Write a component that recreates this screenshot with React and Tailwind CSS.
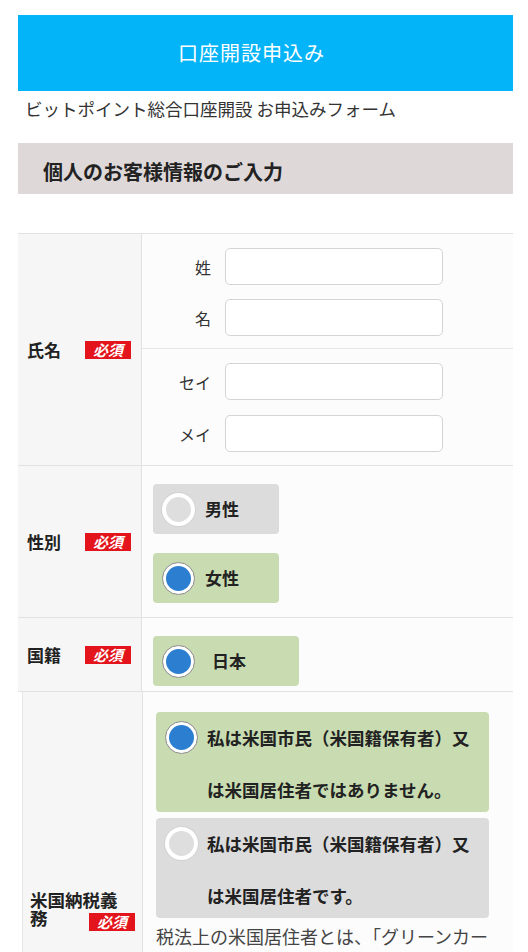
import React from "react";

const FONT = { fontFamily: '"Noto Sans CJK JP", "Noto Sans", sans-serif' };

function Badge() {
  return (
    <span className="inline-flex items-center justify-center w-[46px] h-[18px] bg-[#e3141b] text-white text-[15px] leading-[18px] italic font-bold">
      必須
    </span>
  );
}

function Radio({ checked }) {
  if (checked) {
    return (
      <span className="shrink-0 w-[33px] h-[33px] rounded-full border border-[#8a8a8a] bg-white flex items-center justify-center">
        <span className="w-[25px] h-[25px] rounded-full bg-[#2c7fd0]" />
      </span>
    );
  }
  return (
    <span className="shrink-0 w-[33px] h-[33px] rounded-full border-[4px] border-white bg-[#dedede] shadow-[0_0_0_1px_#d2d2d2]" />
  );
}

function LeftCell({ label }) {
  return (
    <div className="w-[124px] shrink-0 bg-[#f6f6f6] border-r border-[#e2e2e2] flex items-center pl-[9px]">
      <span className="w-[58px] text-[17px] font-bold text-[#222]">{label}</span>
      <Badge />
    </div>
  );
}

function InputRow({ label }) {
  return (
    <div className="flex items-center">
      <span className="w-[69px] text-right text-[16px] text-[#333]">{label}</span>
      <div className="ml-[14px] w-[218px] h-[37px] rounded-[5px] border border-[#d4d4d4] bg-white" />
    </div>
  );
}

function Choice({ checked, children, w }) {
  return (
    <div
      className={`${w} h-[50px] rounded-[4px] flex items-center pl-[9px] ${
        checked ? "bg-[#c9dcb1]" : "bg-[#dcdcdc]"
      }`}
    >
      <Radio checked={checked} />
      <span className="ml-[10px] text-[17px] font-bold text-[#222]">{children}</span>
    </div>
  );
}

function LongChoice({ checked, children }) {
  return (
    <div
      className={`w-[333px] h-[100px] rounded-[4px] flex items-start pl-[9px] pt-[9px] ${
        checked ? "bg-[#c9dcb1]" : "bg-[#dcdcdc]"
      }`}
    >
      <Radio checked={checked} />
      <p className="ml-[9px] -mt-[9px] w-[272px] text-[17.5px] leading-[52px] font-bold text-[#222]">
        {children}
      </p>
    </div>
  );
}

export default function App() {
  return (
    <div className="w-[528px] h-[952px] overflow-hidden bg-white pt-[15px]" style={FONT}>
      <div className="ml-[18px] w-[495px] h-[76px] bg-[#03b4f8] flex items-center justify-center pr-[28px]">
        <span className="text-white text-[20px] tracking-[1px]">口座開設申込み</span>
      </div>

      <div className="h-[52px] pl-[25px] pt-[6px]">
        <p className="text-[17.5px] leading-[24px] text-[#333]">
          ビットポイント総合口座開設 お申込みフォーム
        </p>
      </div>

      <div className="ml-[18px] w-[495px] h-[51px] bg-[#ded8d9] flex items-center pl-[25px] pt-[6px]">
        <span className="text-[20px] font-bold text-[#222]">個人のお客様情報のご入力</span>
      </div>

      <div className="h-[39px]" />

      <div className="ml-[18px] w-[495px] border-t border-[#e2e2e2]">
        {/* 氏名 */}
        <div className="flex border-b border-[#e2e2e2] h-[232px]">
          <LeftCell label="氏名" />
          <div className="flex-1 bg-[#fcfcfc] flex flex-col">
            <div className="flex flex-col gap-[14px] pt-[14px] h-[115px] border-b border-[#e6e6e6]">
              <InputRow label="姓" />
              <InputRow label="名" />
            </div>
            <div className="flex flex-col gap-[15px] pt-[14px]">
              <InputRow label="セイ" />
              <InputRow label="メイ" />
            </div>
          </div>
        </div>

        {/* 性別 */}
        <div className="flex border-b border-[#e2e2e2] h-[152px]">
          <LeftCell label="性別" />
          <div className="flex-1 bg-[#fcfcfc] flex flex-col gap-[19px] pt-[18px] pl-[11px]">
            <Choice checked={false} w="w-[126px]">男性</Choice>
            <Choice checked={true} w="w-[126px]">女性</Choice>
          </div>
        </div>

        {/* 国籍 */}
        <div className="flex border-b border-[#e2e2e2] h-[74px]">
          <LeftCell label="国籍" />
          <div className="flex-1 bg-[#fcfcfc] pt-[18px] pl-[11px]">
            <Choice checked={true} w="w-[146px]">
              <span className="ml-[7px]">日本</span>
            </Choice>
          </div>
        </div>

        {/* 米国納税義務 */}
        <div className="flex ml-[4px] border-l border-[#e6e6e6]">
          <div className="w-[120px] shrink-0 bg-[#f6f6f6] border-r border-[#e2e2e2] pl-[7px] pt-[199px]">
            <div className="text-[17.5px] leading-[18px] font-bold text-[#222]">米国納税義</div>
            <div className="flex items-start">
              <span className="w-[59px] text-[17.5px] leading-[18px] font-bold text-[#222]">務</span>
              <span className="mt-[0px]">
                <Badge />
              </span>
            </div>
            <div className="h-[300px]" />
          </div>
          <div className="flex-1 bg-[#fcfcfc] pt-[20px] pl-[13px]">
            <div className="flex flex-col gap-[6px]">
              <LongChoice checked={true}>私は米国市民（米国籍保有者）又は米国居住者ではありません。</LongChoice>
              <LongChoice checked={false}>私は米国市民（米国籍保有者）又は米国居住者です。</LongChoice>
            </div>
            <p className="mt-[4px] pr-[2px] text-[18px] leading-[28px] text-[#444]">
              税法上の米国居住者とは、「グリーンカード」保持者や、一定期間以上米国に滞在している方などをいいます。
            </p>
          </div>
        </div>
      </div>
    </div>
  );
}
